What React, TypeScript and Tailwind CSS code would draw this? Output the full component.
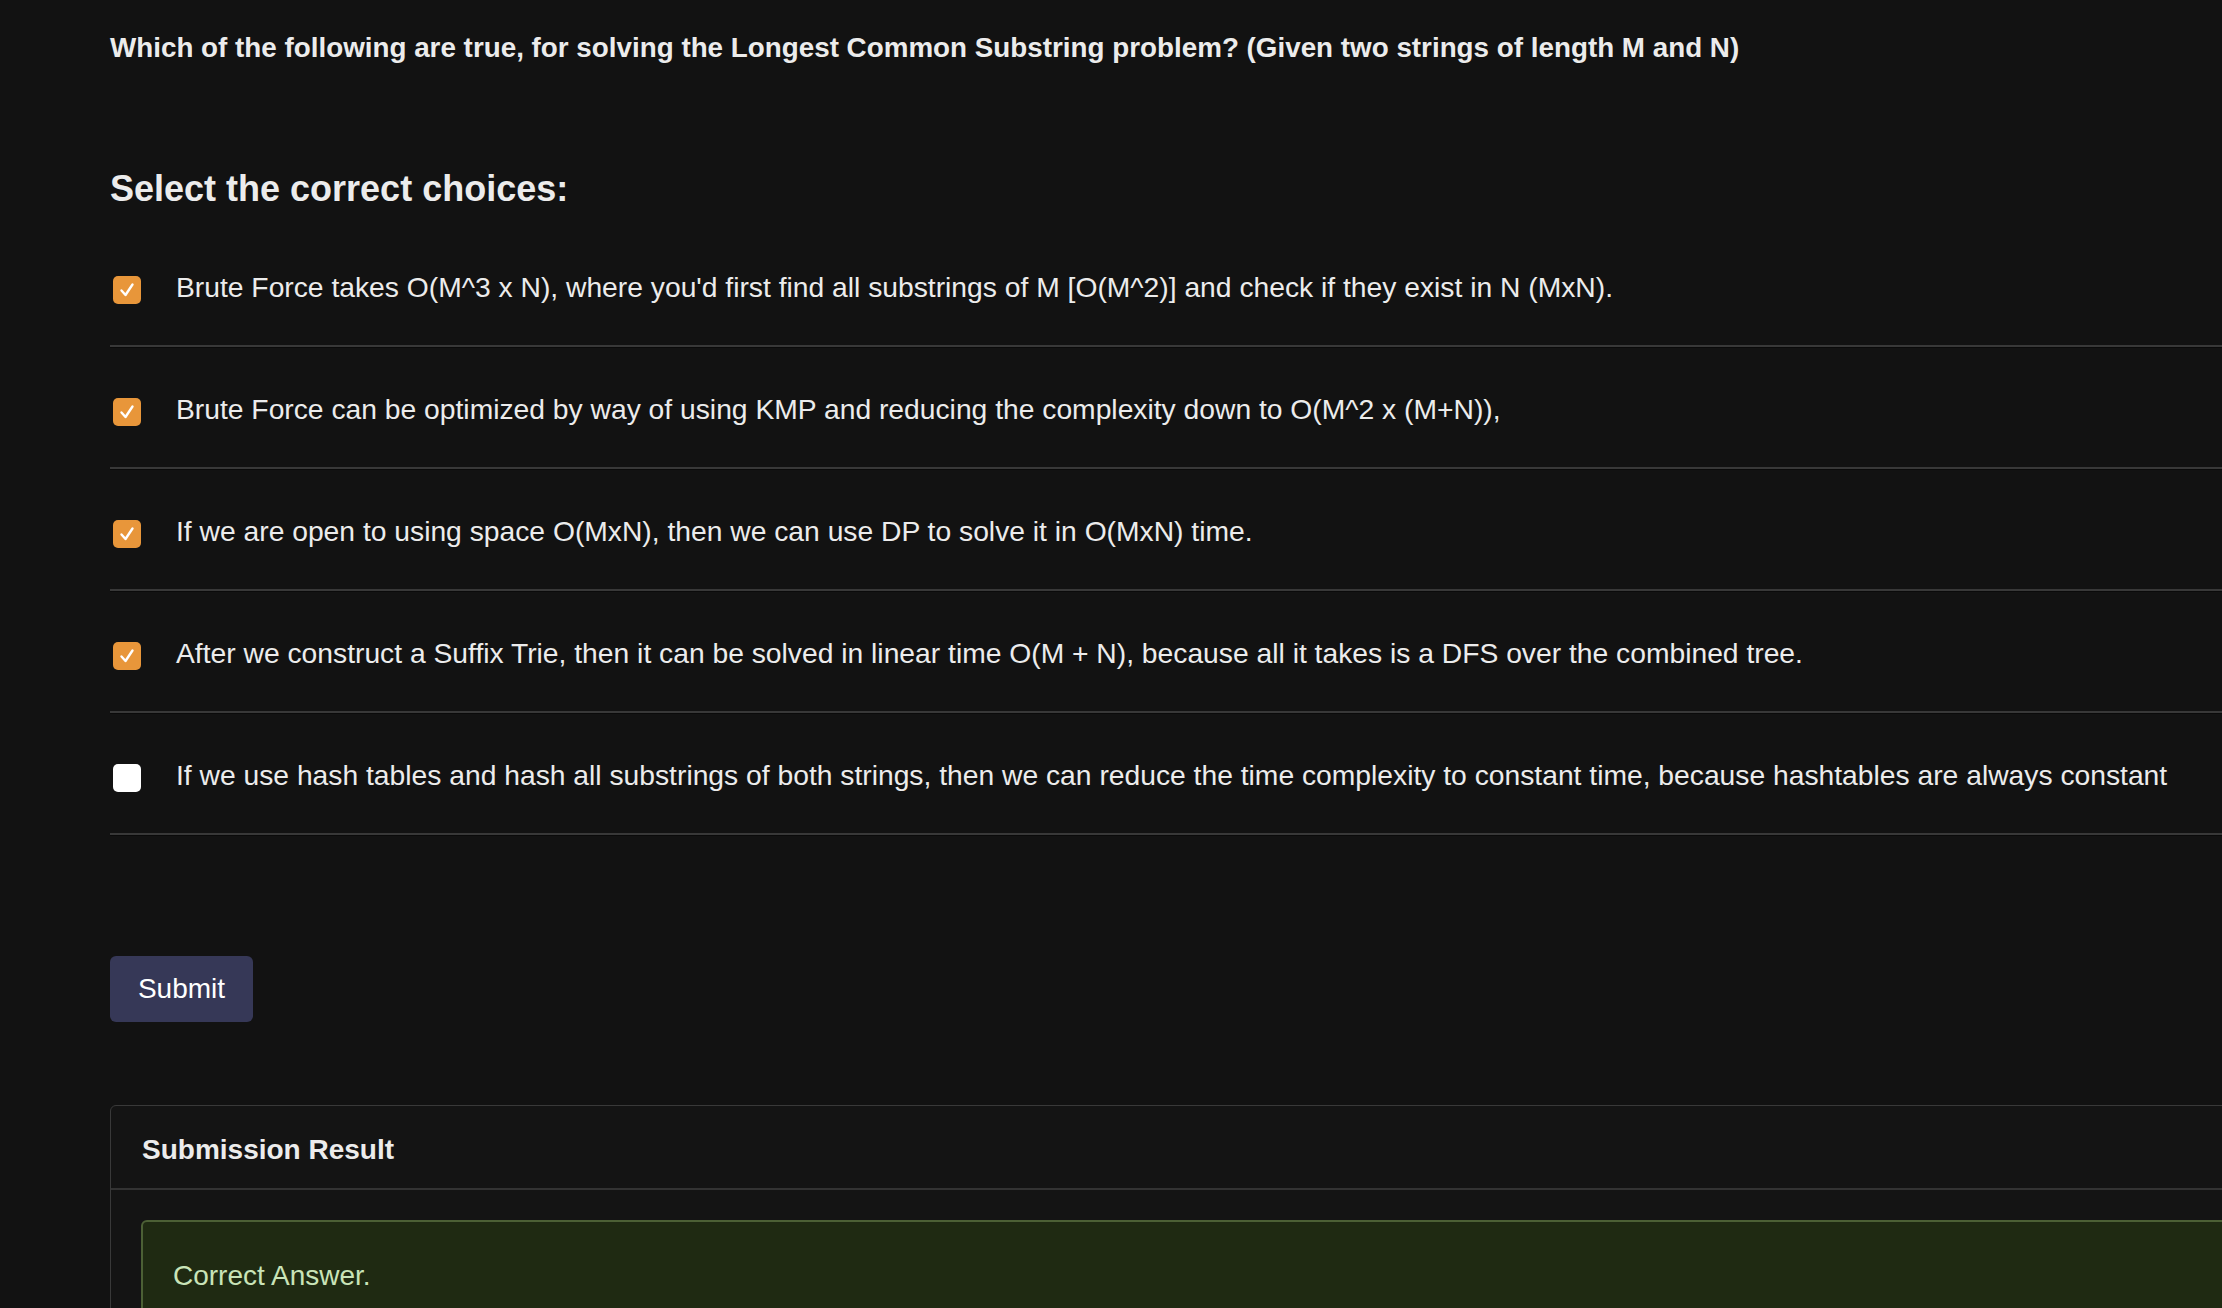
import React from 'react';

const choices = [
  { text: "Brute Force takes O(M^3 x N), where you'd first find all substrings of M [O(M^2)] and check if they exist in N (MxN).", checked: true },
  { text: 'Brute Force can be optimized by way of using KMP and reducing the complexity down to O(M^2 x (M+N)),', checked: true },
  { text: 'If we are open to using space O(MxN), then we can use DP to solve it in O(MxN) time.', checked: true },
  { text: 'After we construct a Suffix Trie, then it can be solved in linear time O(M + N), because all it takes is a DFS over the combined tree.', checked: true },
  { text: 'If we use hash tables and hash all substrings of both strings, then we can reduce the time complexity to constant time, because hashtables are always constant', checked: false },
];

const Checkbox: React.FC<{ checked: boolean }> = ({ checked }) => (
  <div
    className={
      checked
        ? 'ml-[3px] flex h-[28px] w-[28px] shrink-0 items-center justify-center rounded-[5px] bg-[#e8963a]'
        : 'ml-[3px] flex h-[28px] w-[28px] shrink-0 items-center justify-center rounded-[5px] bg-white'
    }
  >
    {checked && (
      <svg width="18" height="18" viewBox="0 0 18 18" fill="none">
        <polyline points="3.5,9.5 7.5,14 14.5,3.5" stroke="white" strokeWidth="2.4" strokeLinecap="round" strokeLinejoin="round" />
      </svg>
    )}
  </div>
);

const App: React.FC = () => {
  return (
    <div className="min-h-screen w-full overflow-hidden bg-[#121212] pl-[110px] text-[#ececec]" style={{ fontFamily: '"Liberation Sans", Arial, sans-serif' }}>
      <h2 className="pt-[31px] text-[27.8px] font-bold leading-[34px]">
        Which of the following are true, for solving the Longest Common Substring problem? (Given two strings of length M and N)
      </h2>

      <h3 className="mt-[102px] text-[36px] font-bold leading-[44px]">Select the correct choices:</h3>

      <div className="mt-[15px]">
        {choices.map((c, i) => (
          <div key={i} className="flex h-[122px] flex-col">
            <div className="flex flex-1 items-center gap-[35px] pt-[8px]">
              <Checkbox checked={c.checked} />
              <span className="mb-[6px] whitespace-nowrap text-[28.25px] leading-[34px]">{c.text}</span>
            </div>
            <div className="h-[3px] border-t-2 border-b border-t-[#383838] border-b-[#0a0a0a]" />
          </div>
        ))}
      </div>

      <button className="mt-[120px] h-[66px] w-[143px] rounded-[6px] bg-[#363857] text-[28px] text-white">
        Submit
      </button>

      <div className="mt-[83px] w-[2160px] rounded-t-[6px] border border-[#393939] bg-[#141414]">
        <div className="flex h-[84px] items-center border-b-2 border-[#333333] px-[31px] pt-[5px]">
          <span className="text-[28px] font-bold">Submission Result</span>
        </div>
        <div className="p-[30px]">
          <div className="rounded-[6px] border-2 border-[#4c6035] bg-[#1f2a12] px-[30px] pt-[37px] pb-[34px] text-[28px] leading-[34px] text-[#c9e4b8]">
            Correct Answer.
          </div>
        </div>
      </div>
    </div>
  );
};

export default App;
